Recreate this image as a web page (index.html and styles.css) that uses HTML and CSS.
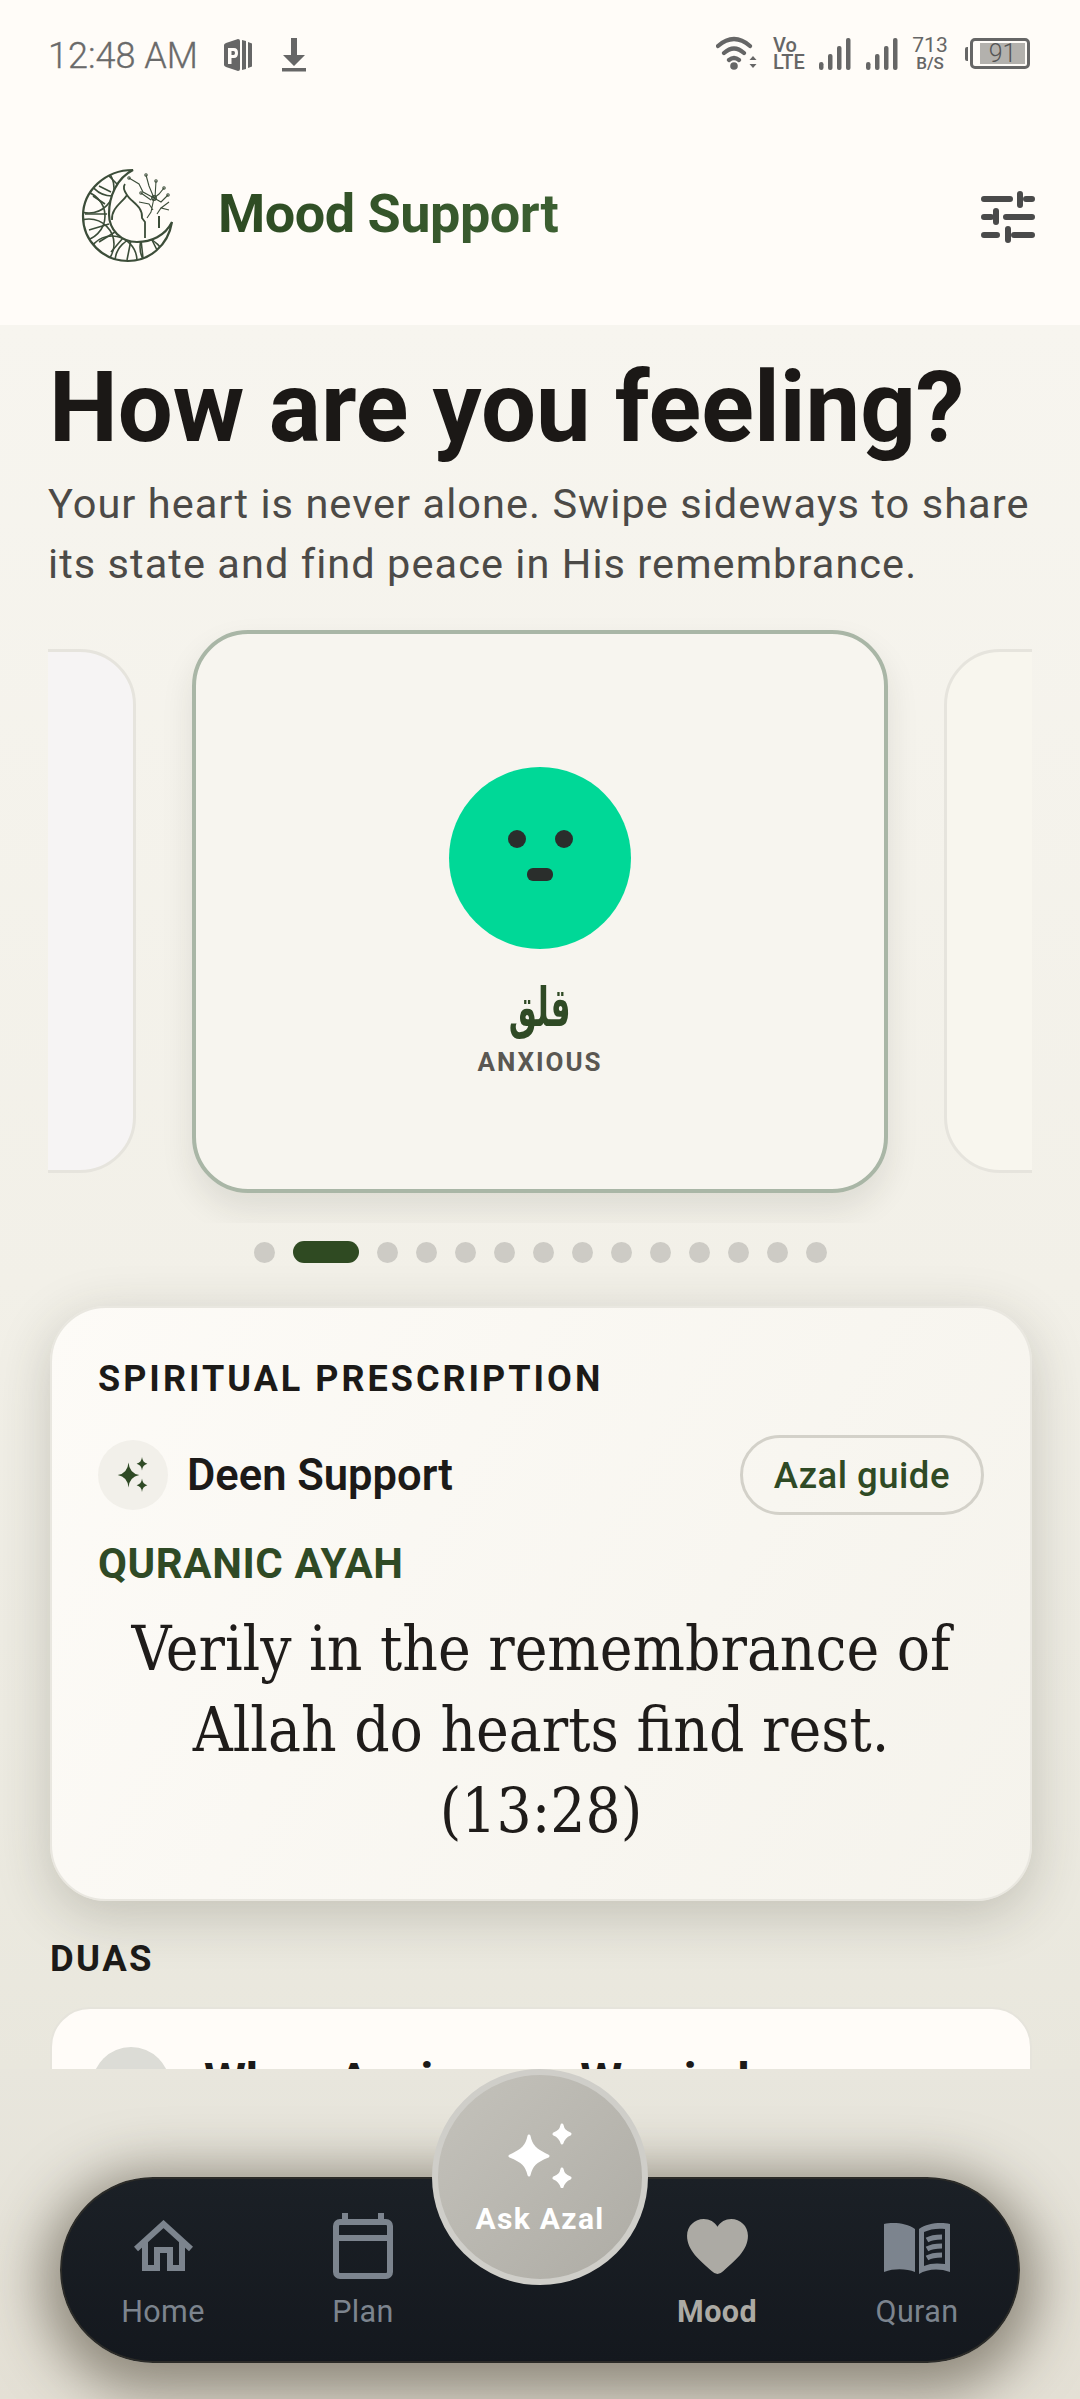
FILE: index.html
```html
<!DOCTYPE html>
<html lang="en">
<head>
<meta charset="utf-8">
<title>Mood Support</title>
<link rel="stylesheet" href="styles.css">
</head>
<body>
<div class="app">
  <div class="top">
    <div class="status">
      <span class="time">12:48 AM</span>
      <svg class="st-p" viewBox="0 0 30 32"><path d="M1 6 Q1 5 3 4 L15 0 Q17 0 17 2 V30 Q17 32 15 32 L3 28 Q1 27 1 26Z" fill="#666"/><path d="M5 9 H11 Q15 9 15 14 Q15 19 11 19 H8.500 V25 H5Z M8.500 12 V16 H10.500 Q12 16 12 14 Q12 12 10.500 12Z" fill="#fffcf8" fill-rule="evenodd"/><path d="M19 1 L23 2 V30 L19 31Z M25 3 L29 4.500 V27.500 L25 29Z" fill="#666"/></svg>
      <svg class="st-d" viewBox="0 0 26 34"><path d="M10 0 H16 V17 H24 L13 28 L2 17 H10Z" fill="#666"/><rect x="1" y="30" width="24" height="3.500" fill="#666"/></svg>
      <span class="st-gap"></span>
      <svg class="st-wifi" viewBox="0 0 42 34"><path d="M2 10 Q18 -4 34 10 M8 17 Q18 8 28 17 M13 24 Q18 20 23 24" fill="none" stroke="#666" stroke-width="4.200" stroke-linecap="round"/><circle cx="18" cy="30" r="3.800" fill="#666"/><path d="M37 20 l3.500 4 h-7Z M37 32 l3.500 -4 h-7Z" fill="#666"/></svg>
      <span class="st-vo"><span>Vo</span><span>LTE</span></span>
      <svg class="st-sig" viewBox="0 0 32 32"><g fill="#666"><rect x="0" y="24" width="4.500" height="8" rx="2.200"/><rect x="9" y="16" width="4.500" height="16" rx="2"/><rect x="18" y="8" width="4.500" height="24" rx="2"/><rect x="27" y="0" width="4.500" height="32" rx="2"/></g></svg>
      <svg class="st-sig st-sig2" viewBox="0 0 32 32"><g fill="#666"><rect x="0" y="24" width="4.500" height="8" rx="2.200"/><rect x="9" y="16" width="4.500" height="16" rx="2"/><rect x="18" y="8" width="4.500" height="24" rx="2"/><rect x="27" y="0" width="4.500" height="32" rx="2"/></g></svg>
      <span class="st-bs"><span>713</span><span class="st-bs2">B/S</span></span>
      <span class="st-bat"><span class="st-nub"></span><span class="st-body"><span class="st-fill">91</span></span></span>
    </div>
    <header class="head">
      <svg class="logo" viewBox="0 0 100 100" fill="none" stroke="#3c4d39">
        <defs><clipPath id="moon"><path d="M54 4 C38 12 30 30 30 48 C30 64 42 76 58 76 C72 76 86 70 93 56 C89 80 70 95 49 95 C24 95 4 75 4 50 C4 25 26 4 54 4Z"/></clipPath></defs>
        <g clip-path="url(#moon)" stroke-width="1.600">
          <circle cx="1" cy="50" r="25"/><circle cx="10" cy="22" r="25"/><circle cx="33" cy="5" r="25"/><circle cx="10" cy="78" r="25"/><circle cx="33" cy="95" r="25"/><circle cx="61" cy="96" r="25"/><circle cx="86" cy="81" r="25"/>
          <path d="M14 30 L26 38 M20 20 L32 26 M30 10 L38 18 M6 48 L28 48 M10 64 L30 58 M20 76 L36 66 M32 86 L44 72 M48 94 L52 74 M64 92 L62 74 M78 84 L72 72"/>
        </g>
        <path d="M54 4 C38 12 30 30 30 48 C30 64 42 76 58 76 C72 76 86 70 93 56 C89 80 70 95 49 95 C24 95 4 75 4 50 C4 25 26 4 54 4Z" stroke-width="2.200"/>
        <path d="M46 18 C43 22 46 26 48 29 C52 36 64 40 63 52 L66 56 V72 M48 29 C44 36 32 42 33 54" stroke-width="1.800"/>
        <g stroke-width="1.100"><path d="M50 12 L60 18 L64 26 L75 32 M67 9 L70 20 L75 32 M77 15 L76 32 M85 22 L80 28 L75 32 M89 29 L82 36 L75 32 M75 32 L72 46 L68 52 M62 27 L72 34 M60 36 L70 38 L74 44 M90 44 L82 42 L78 48 M82 42 L90 36"/><circle cx="75" cy="32" r="2.200" stroke-width="1.500"/><circle cx="50" cy="12" r="1.200"/><circle cx="67" cy="9" r="1.200"/><circle cx="77" cy="15" r="1.200"/><circle cx="85" cy="22" r="1.200"/><circle cx="89" cy="29" r="1.200"/><circle cx="62" cy="27" r="1.200"/></g>
        <path d="M80 50 V62" stroke-width="2"/>
      </svg>
      <h1 class="brand">Mood Support</h1>
      <svg class="tune" viewBox="0 0 54 52" fill="none" stroke="#4a4a4a" stroke-width="6" stroke-linecap="round"><path d="M3 8 H29 M39 3 V14 M45 8 H51 M3 26 H10 M15 20 V31 M25 26 H51 M3 44 H16 M27 38 V49 M33 44 H51"/></svg>
    </header>
  </div>

  <main class="main">
    <h2 class="title">How are you feeling?</h2>
    <p class="lead">Your heart is never alone. Swipe sideways to share its state and find peace in His remembrance.</p>

    <div class="carousel">
      <div class="side side-l"></div>
      <div class="mood">
        <div class="face">
          <span class="eyes"><i></i><i></i></span>
          <span class="mouth"></span>
        </div>
        <div class="ar" lang="ar" dir="rtl">قلق</div>
        <div class="en">ANXIOUS</div>
      </div>
      <div class="side side-r"></div>
    </div>

    <div class="dots">
      <i></i><i class="on"></i><i></i><i></i><i></i><i></i><i></i><i></i><i></i><i></i><i></i><i></i><i></i><i></i>
    </div>

    <section class="rx">
      <h3 class="rx-h">SPIRITUAL PRESCRIPTION</h3>
      <div class="rx-row">
        <span class="rx-ic">
          <svg viewBox="0 0 40 40" fill="#2f4a25"><path d="M15 6 Q16 18 27 20 Q16 22 15 34 Q14 22 3 20 Q14 18 15 6Z"/><path d="M30 0 Q30.500 6 36 7.500 Q30.500 9 30 15 Q29.500 9 24 7.500 Q29.500 6 30 0Z"/><path d="M30 24 Q30.500 30 36 31.500 Q30.500 33 30 39 Q29.500 33 24 31.500 Q29.500 30 30 24Z"/></svg>
        </span>
        <span class="rx-name">Deen Support</span>
        <span class="pill">Azal guide</span>
      </div>
      <div class="rx-kind">QURANIC AYAH</div>
      <p class="ayah">Verily in the remembrance of Allah do hearts find rest. (13:28)</p>
    </section>

    <h3 class="duas-h">DUAS</h3>
    <section class="dua">
      <span class="dua-ic"></span>
      <span class="dua-t">When Anxious or Worried</span>
    </section>
  </main>

  <div class="dock">
    <nav class="nav">
      <a class="tab">
        <span class="ic-box"><svg viewBox="0 0 59 51" class="ic-home" fill="none" stroke="#7c848e" stroke-width="6"><path d="M2 29 L29.500 4 L57 29"/><path d="M11 22 V48 H23 V30 H36 V48 H48 V22"/></svg></span>
        <span class="tab-t">Home</span>
      </a>
      <a class="tab">
        <span class="ic-box"><svg viewBox="0 0 60 66" class="ic-plan" fill="none" stroke="#7c848e" stroke-width="6"><rect x="3" y="9" width="54" height="54" rx="4"/><path d="M3 25 H57"/><path d="M12 0 V8 M48 0 V8"/></svg></span>
        <span class="tab-t">Plan</span>
      </a>
      <span class="tab tab-gap"></span>
      <a class="tab tab-on">
        <span class="ic-box"><svg viewBox="0 0 64 56" class="ic-heart"><path d="M32 56 Q29 56 26 53 C14 42 1 32 1 17 C1 7 9 0 18 0 C24 0 29 3 32 8 C35 3 40 0 46 0 C55 0 63 7 63 17 C63 32 50 42 38 53 Q35 56 32 56Z" fill="#acaaa4"/></svg></span>
        <span class="tab-t">Mood</span>
      </a>
      <a class="tab">
        <span class="ic-box"><svg viewBox="0 0 68 52" class="ic-book"><path d="M32 7 C24 1 10 0 1 2 V50 C12 46 24 47 32 50Z" fill="#7c848e"/><path d="M36 7 C44 1 58 0 67 2 V50 C56 46 44 47 36 52Z M41 10 V44 C47 41 55 41 62 42 V7 C55 6 47 7 41 10Z" fill="#7c848e" fill-rule="evenodd"/><path d="M44 18 C49 15 54 15 59 15 M44 27 C49 24 54 24 59 24 M44 36 C49 33 54 33 59 33" stroke="#7c848e" stroke-width="5" fill="none"/></svg></span>
        <span class="tab-t">Quran</span>
      </a>
    </nav>
    <button class="ask">
      <svg viewBox="0 0 66 66"><g fill="#fff" stroke="#fff" stroke-width="3" stroke-linejoin="round"><path d="M22 14 C24 24 28 28 41 34 C28 39 24 44 22 53 C20 44 16 39 3 34 C16 28 20 24 22 14Z"/><path d="M55 3 C56 8 58 10 63 12 C58 14 56 17 55 21 C54 17 52 14 47 12 C52 10 54 8 55 3Z"/><path d="M55 47 C56 52 58 54 63 56 C58 58 56 61 55 65 C54 61 52 58 47 56 C52 54 54 52 55 47Z"/></g></svg>
      <span>Ask Azal</span>
    </button>
  </div>
</div>
</body>
</html>
```

FILE: styles.css
```css
* { box-sizing: border-box; }
html, body { margin: 0; padding: 0; height: 100%; overflow: hidden; }
body { font-family: Roboto, sans-serif; background: #f5f3ed; }
.app { width: 1080px; height: 2399px; display: flex; flex-direction: column; position: relative; overflow: hidden; }

.top { height: 325px; background: #fffcf8; flex: none; }
.status { height: 108px; display: flex; align-items: center; padding: 0 48px; color: #666; }
.time { font-size: 36px; font-weight: 300; width: 175px; color: #6a6a6a; -webkit-text-stroke: .3px #6a6a6a; margin-top: 3px; }
.st-p { width: 30px; height: 32px; margin-top: 2px; }
.st-d { width: 26px; height: 34px; margin-left: 28px; margin-top: 2px; }
.st-gap { flex: 1; }
.st-wifi { width: 42px; height: 34px; margin-right: 15px; margin-top: -2px; }
.st-vo { display: flex; flex-direction: column; font-size: 20px; line-height: 17px; font-weight: 500; width: 32px; color: #666; margin-top: -1px; }
.st-sig { width: 32px; height: 32px; margin-left: 14px; margin-top: -1px; }
.st-sig2 { margin-left: 15px; }
.st-bs { display: flex; flex-direction: column; align-items: center; font-size: 21px; line-height: 19px; margin-left: 15px; width: 34px; color: #666; margin-top: -1px; }
.st-bs2 { font-size: 17px; line-height: 16px; font-weight: 500; }
.st-bat { display: flex; align-items: center; margin-left: 18px; margin-right: 2px; margin-top: -1px; }
.st-nub { width: 3px; height: 14px; background: #666; border-radius: 2px 0 0 2px; margin-right: 2px; }
.st-body { width: 60px; height: 31px; border: 3px solid #666; border-radius: 5px; display: flex; align-items: stretch; padding: 2px 2px 2px 7px; }
.st-fill { width: 45px; background: #b3b1ad; font-size: 25px; line-height: 21px; text-align: center; color: #555; font-weight: 300; }

.head { height: 217px; display: flex; align-items: center; padding: 0 45px 0 79px; }
.logo { width: 100px; height: 100px; flex: none; margin-top: -1px; }
.brand { margin: -6px 0 0 39px; flex: 1; font-size: 54px; font-weight: 700; letter-spacing: -.5px; background: linear-gradient(90deg, #2d4a22, #4f7a45); -webkit-background-clip: text; background-clip: text; color: transparent; }
.tune { width: 54px; height: 52px; flex: none; }

.main { height: 1744px; flex: none; overflow: hidden; padding: 0 48px; background: linear-gradient(180deg, #f7f5ef 0%, #f2f0e8 55%, #e9e7dd 100%); }
.title { margin: 33px 0 0 1px; font-size: 97.500px; line-height: 100px; font-weight: 700; color: #1b1816; }
.lead { margin: 16px 0 0; font-size: 41.500px; line-height: 60px; letter-spacing: 1.050px; color: #4c4a47; }

.carousel { margin-top: 19px; height: 610px; display: flex; align-items: center; justify-content: center; gap: 56px; overflow: hidden; }
.mood { width: 696px; height: 563px; flex: none; background: #f7f5ef; border: 4px solid #a9b6a6; border-radius: 56px; box-shadow: 0 16px 32px rgba(40,40,30,.10); display: flex; flex-direction: column; align-items: center; padding-top: 133px; margin-top: -14px; }
.side { width: 400px; height: 524px; flex: none; border: 3px solid #e6e4dd; border-radius: 56px; margin-top: -14px; }
.side-l { background: #f6f4f4; }
.side-r { background: #f8f6ee; }
.face { width: 182px; height: 182px; border-radius: 50%; background: #00d897; display: flex; flex-direction: column; align-items: center; padding-top: 63px; flex: none; }
.eyes { display: flex; gap: 29px; }
.eyes i { width: 18px; height: 18px; border-radius: 50%; background: #2a2e2c; display: block; }
.mouth { width: 26px; height: 13px; border-radius: 6px; background: #2a2e2c; margin-top: 20px; }
.ar { margin-top: 31px; font-family: "DejaVu Sans", sans-serif; font-stretch: condensed; font-weight: 700; font-size: 46px; line-height: 54px; color: #2f4a25; transform: scale(.76, 1.18); }
.en { margin-top: 11px; font-size: 26px; line-height: 34px; font-weight: 700; letter-spacing: 1.950px; color: #5a5752; }

.dots { display: flex; justify-content: center; align-items: center; gap: 18px; margin-top: 17px; height: 24px; }
.dots i { width: 21px; height: 21px; border-radius: 50%; background: #cdcbc5; display: block; }
.dots i.on { width: 66px; height: 22px; border-radius: 11px; background: #2f4a22; }

.rx { margin: 42px 0 0 2px; height: 595px; background: linear-gradient(120deg, #fdfbf7, #f5f3ec); border: 2px solid #e9e7e0; border-radius: 56px; padding: 49px 46px; box-shadow: 0 14px 54px rgba(50,50,35,.22); }
.rx-h { margin: 0; font-size: 36px; line-height: 44px; font-weight: 700; letter-spacing: 3px; color: #1c1a18; }
.rx-row { display: flex; align-items: center; margin-top: 34px; }
.rx-ic { width: 70px; height: 70px; border-radius: 50%; background: #f2f0ea; display: flex; align-items: center; justify-content: center; flex: none; }
.rx-ic svg { width: 36px; height: 36px; }
.rx-name { margin-left: 19px; flex: 1; font-size: 43.500px; font-weight: 600; color: #1c1a18; }
.pill { height: 80px; padding: 0 31px; border: 3px solid #d3d1c9; border-radius: 40px; display: flex; align-items: center; font-size: 36.500px; font-weight: 500; color: #2f4a25; letter-spacing: .5px; }
.rx-kind { margin-top: 25px; font-size: 42px; line-height: 48px; font-weight: 700; color: #2f4a25; letter-spacing: .6px; }
.ayah { margin: 21px 0 0; text-align: center; font-family: "DejaVu Serif", serif; font-stretch: condensed; font-size: 61.500px; line-height: 81px; color: #1f1c1a; }

.duas-h { margin: 38px 0 0 2px; font-size: 36.500px; line-height: 40px; font-weight: 700; letter-spacing: 2.400px; color: #1c1a18; }
.dua { margin: 28px 0 0 2px; height: 200px; background: #fffcf8; border: 2px solid #e6e4dc; border-radius: 40px; padding: 38px 40px; display: flex; gap: 34px; }
.dua-ic { width: 78px; height: 78px; border-radius: 50%; background: #dcdcd6; flex: none; }
.dua-t { font-size: 48px; font-weight: 700; color: #1c1a18; line-height: 60px; margin-top: 4px; white-space: nowrap; }

.dock { flex: 1; position: relative; background: linear-gradient(180deg, #e8e6dd 0%, #e4e0d5 100%); display: flex; justify-content: center; align-items: flex-start; padding-top: 108px; }
.nav { width: 960px; height: 186px; border-radius: 93px; background: linear-gradient(180deg, #1b2026, #14181e); border: 2px solid #2b2b28; box-shadow: 0 12px 54px 18px rgba(60,52,35,.5); display: grid; grid-template-columns: 200px 200px 154px 200px 200px; justify-content: center; padding-top: 34px; }
.tab { display: flex; flex-direction: column; align-items: center; color: #7c848e; font-size: 30.500px; letter-spacing: .4px; }
.ic-box { height: 66px; display: flex; align-items: center; justify-content: center; }
.ic-home { width: 59px; height: 51px; margin-top: -2px; }
.ic-plan { width: 60px; height: 66px; }
.ic-heart { width: 63px; height: 55px; }
.ic-book { width: 68px; height: 52px; margin-top: 4px; }
.tab-t { margin-top: 15px; line-height: 36px; }
.tab-on { color: #acaaa4; font-weight: 700; }
.ask { position: absolute; left: 432px; top: 0; width: 216px; height: 216px; border-radius: 50%; border: 6px solid #cfcec9; background: linear-gradient(135deg, #c4c2bb, #aeaca5); display: flex; flex-direction: column; align-items: center; padding: 47px 0 0; color: #fff; font-family: Roboto, sans-serif; font-size: 30px; font-weight: 700; letter-spacing: 1.300px; }
.ask svg { width: 66px; height: 66px; }
.ask span { margin-top: 14px; line-height: 34px; }
```
